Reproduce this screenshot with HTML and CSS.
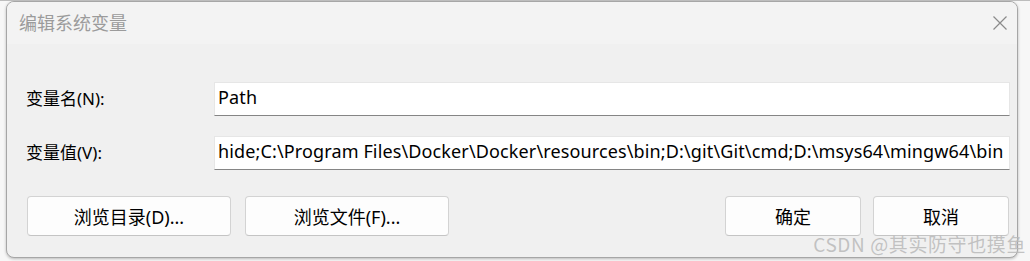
FILE: index.html
```html
<!DOCTYPE html>
<html lang="zh-CN">
<head>
  <meta charset="UTF-8" />
  <title>编辑系统变量</title>
  <link rel="stylesheet" href="styles.css">
</head>
<body>
  <div class="dialog">
    <div class="titlebar">
      <span class="title">编辑系统变量</span>
      <svg class="close" width="14" height="14" viewBox="0 0 14 14">
        <path d="M0.5 0.5 L13.5 13.5 M13.5 0.5 L0.5 13.5" stroke="#8a8a8a" stroke-width="1.2" fill="none" />
      </svg>
    </div>

    <div class="content">
      <div class="field-row">
        <label class="label">变量名(N):</label>
        <div class="input">Path</div>
      </div>
      <div class="field-row second">
        <label class="label">变量值(V):</label>
        <div class="input">hide;C:\Program Files\Docker\Docker\resources\bin;D:\git\Git\cmd;D:\msys64\mingw64\bin</div>
      </div>

      <div class="button-row">
        <div class="left-buttons">
          <button class="btn wide">浏览目录(D)...</button>
          <button class="btn wide">浏览文件(F)...</button>
        </div>
        <div class="right-buttons">
          <button class="btn">确定</button>
          <button class="btn">取消</button>
        </div>
      </div>
    </div>
  </div>

  <div class="watermark">CSDN @其实防守也摸鱼</div>
</body>
</html>
```

FILE: styles.css
```css
body {
  position: relative;
  margin: 0;
  width: 1030px;
  height: 261px;
  overflow: hidden;
  background: #f7f7f7;
  font-family: "Noto Sans", "Noto Sans CJK SC", sans-serif;
  color: #000;
  border-top: 1px solid #bdbdbd;
  box-sizing: border-box;
}

.dialog {
  width: 1012px;
  height: 257px;
  margin: 0 0 0 6px;
  border: 1px solid #a6a6a6;
  border-radius: 8px;
  background: #f0f0f0;
  box-sizing: border-box;
  overflow: hidden;
  box-shadow: 0 1px 3px rgba(0, 0, 0, 0.25);
}

.titlebar {
  height: 42px;
  background: #f3f3f3;
  display: flex;
  align-items: center;
  justify-content: space-between;
  padding: 0 10px 0 12px;
}

.title {
  font-family: "Noto Sans CJK SC", sans-serif;
  font-size: 18px;
  color: #9b9b9b;
  line-height: 1;
  margin-top: -2px;
}

.close {
  display: block;
}

.content {
  padding: 38px 7px 0 19px;
}

.field-row {
  display: flex;
  align-items: center;
  height: 34px;
}

.field-row.second {
  margin-top: 20px;
}

.label {
  width: 188px;
  flex: none;
  font-size: 17px;
  padding-bottom: 4px;
}

.input {
  flex: 1;
  height: 34px;
  background: #fff;
  border: 1px solid #e6e6e6;
  border-bottom: 1px solid #858585;
  box-sizing: border-box;
  padding: 1px 0 0 3px;
  font-size: 18px;
  line-height: 26px;
  letter-spacing: 0.13px;
  white-space: nowrap;
  overflow: hidden;
}

.button-row {
  display: flex;
  justify-content: space-between;
  margin-top: 26px;
  padding: 0 1px 0 1px;
}

.left-buttons,
.right-buttons {
  display: flex;
  gap: 14px;
}

.right-buttons {
  gap: 12px;
}

.btn {
  width: 136px;
  height: 40px;
  background: #fdfdfd;
  border: 1px solid #d3d3d3;
  border-bottom-color: #c4c4c4;
  border-radius: 4px;
  font-family: "Noto Sans", "Noto Sans CJK SC", sans-serif;
  font-size: 18px;
  color: #000;
  padding: 0;
}

.btn.wide {
  width: 204px;
}

.watermark {
  position: absolute;
  right: 4px;
  bottom: 8px;
  font-family: "Noto Sans CJK SC", sans-serif;
  font-size: 19px;
  line-height: 1;
  color: rgba(185, 185, 185, 0.85);
  letter-spacing: 0.6px;
}
```
